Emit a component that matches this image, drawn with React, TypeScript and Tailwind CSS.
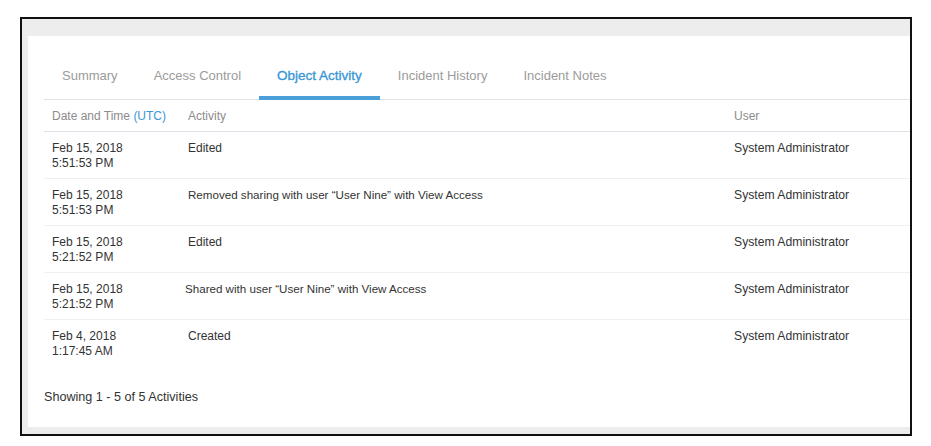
import React from "react"

const tabs = ["Summary", "Access Control", "Object Activity", "Incident History", "Incident Notes"]

const rows = [
  { date: "Feb 15, 2018", time: "5:51:53 PM", activity: "Edited", shift: false },
  { date: "Feb 15, 2018", time: "5:51:53 PM", activity: "Removed sharing with user \u201cUser Nine\u201d with View Access", shift: false },
  { date: "Feb 15, 2018", time: "5:21:52 PM", activity: "Edited", shift: false },
  { date: "Feb 15, 2018", time: "5:21:52 PM", activity: "Shared with user \u201cUser Nine\u201d with View Access", shift: true },
  { date: "Feb 4, 2018", time: "1:17:45 AM", activity: "Created", shift: false },
]

export default function App() {
  return (
    <div className="w-[931px] h-[446px] bg-white pt-[17px] pl-[20px] font-['Liberation_Sans',Arial,sans-serif]">
      <div className="w-[892px] h-[419px] border-2 border-[#111] bg-[#ededed] overflow-hidden pt-[17px] pl-[6px]">
        <div className="w-[1000px] h-[391px] bg-white pt-[15px] pl-[16px]">
          {/* tabs */}
          <div className="flex h-[49px] border-b border-[#dfe3e8]">
            {tabs.map((t) => {
              const active = t === "Object Activity"
              return (
                <div
                  key={t}
                  className={
                    active
                      ? "relative flex items-center pt-[2px] px-[18px] text-[13.5px] text-[#3a97d6] [-webkit-text-stroke:0.35px_#3a97d6]"
                      : "relative flex items-center pt-[2px] px-[18px] text-[13px] text-[#9b9b9b]"
                  }
                >
                  {t}
                  {active && <div className="absolute left-0 right-0 bottom-[-1px] h-[4px] bg-[#4a9fd8]" />}
                </div>
              )
            })}
          </div>

          {/* header */}
          <div className="flex h-[32px] items-center border-b border-[#dde2e8] text-[12px] text-[#8c8c8c]">
            <div className="w-[136px] pl-[8px]">
              Date and Time <span className="text-[#3a97d6]">(UTC)</span>
            </div>
            <div className="w-[546px] pl-[8px]">Activity</div>
            <div className="pl-[8px]">User</div>
          </div>

          {/* rows */}
          {rows.map((r, i) => (
            <div
              key={i}
              className={
                i < rows.length - 1
                  ? "flex h-[47px] pt-[9px] border-b border-[#eef1f4] text-[12px] leading-[15px] text-[#333]"
                  : "flex h-[47px] pt-[9px] text-[12px] leading-[15px] text-[#333]"
              }
            >
              <div className="w-[136px] pl-[8px]">
                <div>{r.date}</div>
                <div>{r.time}</div>
              </div>
              <div className={r.shift ? "w-[546px] pl-[5px]" : "w-[546px] pl-[8px]"}>
                <div className={r.activity.length > 10 ? "text-[11.6px] leading-[14px]" : ""}>{r.activity}</div>
              </div>
              <div className="pl-[8px] text-[12.2px]">System Administrator</div>
            </div>
          ))}

          <div className="mt-[21px] text-[12.6px] text-[#333]">Showing 1 - 5 of 5 Activities</div>
        </div>
      </div>
    </div>
  )
}
